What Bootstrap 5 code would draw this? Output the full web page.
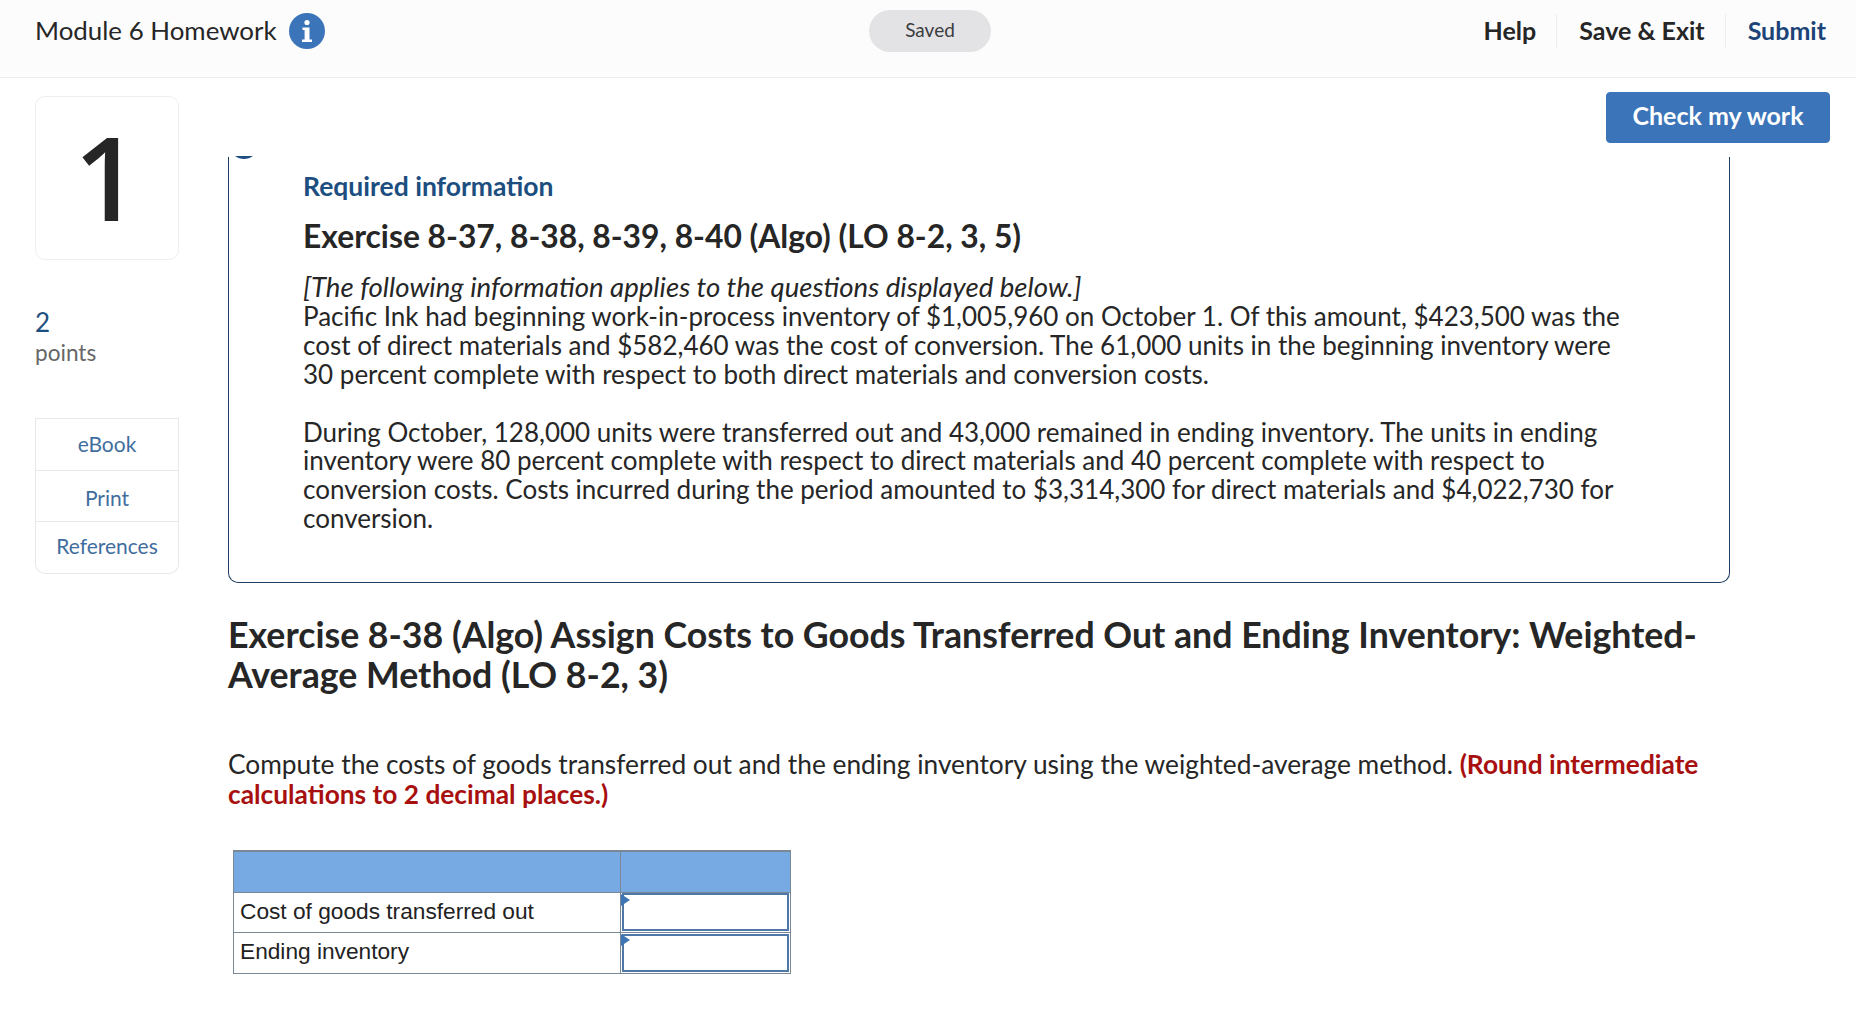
<!DOCTYPE html>
<html lang="en">
<head>
    <meta charset="UTF-8">
    <meta name="viewport" content="width=device-width, initial-scale=1.0">
    <title>Module 6 Homework</title>
    <link href="https://cdn.jsdelivr.net/npm/bootstrap@5.3.3/dist/css/bootstrap.min.css" rel="stylesheet">
    <style>
        body { font-family: Lato, "Liberation Sans", sans-serif; color: #262626; background: #fff; overflow: hidden; }
        .top-bar { height: 78px; background: #fcfcfc; border-bottom: 1px solid #eee; padding-bottom: 16px; }
        .top-side { width: 600px; }
        .top-side.is-left { padding-left: 35px; }
        .hw-title { font-size: 25.9px; }
        .info-dot { width: 36px; height: 36px; margin-top: 2px; }
        .saved-pill { width: 122px; height: 42px; margin-left: 4px; border-radius: 21px; background: #e3e3e6; font-size: 19px; color: #3c3c40; }
        .top-link { font-size: 25px; font-weight: 700; color: #262626; text-decoration: none; padding: 0 20px 0 22px; height: 34px; line-height: 32px; border-left: 1px solid #eee; }
        .top-link:first-child { border-left: 0; }
        .top-link.is-submit { color: #1c4478; padding-right: 30px; }
        .page-wrap { padding-left: 35px; }
        .side-col { width: 144px; padding-top: 18px; }
        .num-card { height: 164px; padding-bottom: 4px; border: 1px solid #eee; border-radius: 10px; font-family: "Open Sans", sans-serif; font-size: 116px; font-weight: 600; line-height: 1; }
        .pts-num { margin-top: 47px; font-size: 26px; line-height: 30px; color: #1c4e80; }
        .pts-label { margin-top: 3px; font-size: 22.6px; line-height: 26px; color: #666; }
        .tool-list { margin-top: 52px; border-color: #e8e8e8; border-radius: 0 0 10px 10px; }
        .tool-list .list-group-item { padding: 0; border-color: #e8e8e8; color: #3f6e9e; font-size: 21px; text-align: center; }
        .tool-a { height: 53px; line-height: 49px; }
        .tool-b { height: 51px; line-height: 53px; }
        .tool-c { height: 52px; line-height: 48px; }
        .main-col { margin-left: 49px; width: 1502px; }
        .check-row { height: 79px; padding-top: 14px; margin-right: -100px; }
        .check-btn { width: 224px; height: 51px; padding: 0 0 3px; background: #3b74b8; border-color: #3b74b8; border-radius: 4px; font-size: 25px; font-weight: 700; }
        .info-box { height: 426px; padding: 14px 60px 0 74px; border: 1px solid #1f3f63; border-top: 0; border-radius: 0 0 10px 10px; }
        .clip-arc { position: absolute; left: 5px; top: -1px; width: 20px; height: 4px; }
        .req-title { font-size: 26.5px; line-height: 30px; font-weight: 700; color: #1c4e80; margin: 0; }
        .ex-title { font-size: 31.8px; line-height: 36px; font-weight: 700; margin: 17px 0 0; }
        .info-text { font-size: 26px; line-height: 28.9px; margin: 19px 0 0; }
        .info-text em { font-size: 27.6px; }
        .ex-head { font-size: 35.7px; line-height: 40px; font-weight: 700; margin: 32px 0 0; }
        .ex-ask { font-size: 26.3px; line-height: 30px; margin: 54px 0 0; }
        .ex-ask b { color: #a81010; }
        .ans-table { width: 558px; margin: 41px 0 0 5px; border-collapse: collapse; font-family: "Liberation Sans", sans-serif; font-size: 22.7px; }
        .ans-table td { height: 40px; padding: 0 6px 2px; border: 1px solid #7a8794; color: #222; line-height: 1; }
        .ans-table .head-row td { background: #77aae3; height: 41px; border-top-width: 2px; }
        .ans-table .end-row td { height: 41px; }
        .ans-table .label-cell { width: 387px; }
        .ans-table td.input-cell { padding: 0; position: relative; }
        .ans-box { display: block; height: 38px; margin: 0 1px; border: 2px solid #4f78a8; }
        .cell-mark { position: absolute; left: 0; top: 1px; border-left: 9px solid #3d75b5; border-top: 6px solid transparent; border-bottom: 6px solid transparent; }
    </style>
</head>
<body>
    <!-- Top bar -->
    <div class="top-bar d-flex justify-content-between align-items-center">
        <div class="top-side is-left d-flex align-items-center gap-2">
            <span class="hw-title me-1">Module 6 Homework</span>
            <svg class="info-dot" viewBox="0 0 36 36">
                <circle cx="18" cy="18" r="18" fill="#3b74b8"/>
                <circle cx="18" cy="9.5" r="2.6" fill="#fff"/>
                <path d="M13.5 14.5h7v12h2.5v2.5H13v-2.5h2.6v-9.5h-2.1z" fill="#fff"/>
            </svg>
        </div>
        <div class="saved-pill d-flex align-items-center justify-content-center">Saved</div>
        <div class="top-side d-flex justify-content-end">
            <a class="top-link" href="#">Help</a>
            <a class="top-link" href="#">Save &amp; Exit</a>
            <a class="top-link is-submit" href="#">Submit</a>
        </div>
    </div>

    <div class="page-wrap d-flex">
        <!-- Left column -->
        <div class="side-col flex-shrink-0">
            <div class="num-card d-flex align-items-center justify-content-center">1</div>
            <div class="pts-num">2</div>
            <div class="pts-label">points</div>
            <ul class="tool-list list-group">
                <li class="list-group-item tool-a">eBook</li>
                <li class="list-group-item tool-b">Print</li>
                <li class="list-group-item tool-c">References</li>
            </ul>
        </div>

        <!-- Question -->
        <div class="main-col">
            <div class="check-row d-flex justify-content-end">
                <button type="button" class="check-btn btn btn-primary">Check my work</button>
            </div>
            <div class="info-box position-relative">
                <svg class="clip-arc" viewBox="0 0 20 4"><path d="M1 0c5 4 13 4 18 0z" fill="#1c4e80"/></svg>
                <p class="req-title">Required information</p>
                <h2 class="ex-title">Exercise 8-37, 8-38, 8-39, 8-40 (Algo) (LO 8-2, 3, 5)</h2>
                <p class="info-text"><em>[The following information applies to the questions displayed below.]</em><br>
                Pacific Ink had beginning work-in-process inventory of $1,005,960 on October 1. Of this amount, $423,500 was the<br>
                cost of direct materials and $582,460 was the cost of conversion. The 61,000 units in the beginning inventory were<br>
                30 percent complete with respect to both direct materials and conversion costs.<br><br>
                During October, 128,000 units were transferred out and 43,000 remained in ending inventory. The units in ending<br>
                inventory were 80 percent complete with respect to direct materials and 40 percent complete with respect to<br>
                conversion costs. Costs incurred during the period amounted to $3,314,300 for direct materials and $4,022,730 for<br>
                conversion.</p>
            </div>
            <h1 class="ex-head">Exercise 8-38 (Algo) Assign Costs to Goods Transferred Out and Ending Inventory: Weighted-<br>Average Method (LO 8-2, 3)</h1>
            <p class="ex-ask">Compute the costs of goods transferred out and the ending inventory using the weighted-average method. <b>(Round intermediate<br>calculations to 2 decimal places.)</b></p>
            <table class="ans-table">
                <tr class="head-row"><td class="label-cell"></td><td></td></tr>
                <tr><td class="label-cell">Cost of goods transferred out</td><td class="input-cell"><span class="ans-box"></span><span class="cell-mark"></span></td></tr>
                <tr class="end-row"><td class="label-cell">Ending inventory</td><td class="input-cell"><span class="ans-box"></span><span class="cell-mark"></span></td></tr>
            </table>
        </div>
    </div>
</body>
</html>
